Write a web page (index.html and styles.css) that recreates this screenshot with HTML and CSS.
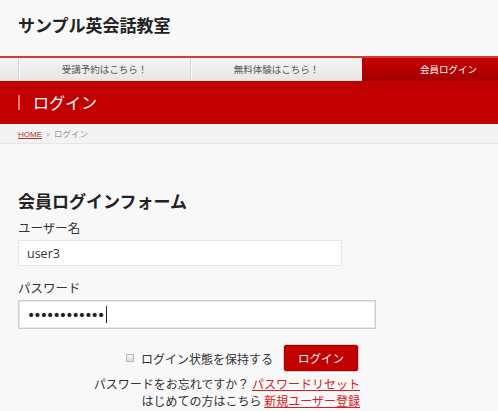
FILE: index.html
```html
<!DOCTYPE html>
<html lang="ja">
<head>
<meta charset="utf-8">
<title>ログイン | サンプル英会話教室</title>
<link rel="stylesheet" href="styles.css">
</head>
<body>
<header class="site-header">
  <h1 class="site-title">サンプル英会話教室</h1>
</header>
<nav class="gnav">
  <div class="gnav-spacer"></div>
  <a class="gnav-item" href="#">受講予約はこちら！</a>
  <a class="gnav-item" href="#">無料体験はこちら！</a>
  <a class="gnav-item is-active" href="#">会員ログイン</a>
</nav>
<div class="page-band">
  <span class="band-bar"></span>
  <h2 class="band-title">ログイン</h2>
</div>
<div class="crumbs">
  <a class="crumb-link" href="#">HOME</a><span class="crumb-sep">»</span><span class="crumb-current">ログイン</span>
</div>
<main class="content">
  <h3 class="form-title">会員ログインフォーム</h3>
  <form class="login-form">
    <div class="field-label">ユーザー名</div>
    <div class="text-input user-input">user3</div>
    <div class="field-label pass-label">パスワード</div>
    <div class="text-input pass-input is-focused"><span class="dots">••••••••••••</span><span class="caret"></span></div>
    <div class="form-foot">
      <div class="submit-row">
        <label class="remember"><span class="check"></span>ログイン状態を保持する</label>
        <button class="login-btn" type="button">ログイン</button>
      </div>
      <p class="foot-line">パスワードをお忘れですか？ <a class="red-link" href="#">パスワードリセット</a></p>
      <p class="foot-line">はじめての方はこちら <a class="red-link" href="#">新規ユーザー登録</a></p>
    </div>
  </form>
</main>
</body>
</html>
```
FILE: styles.css
```css
html, body {
  margin: 0;
  padding: 0;
}
body {
  background: #f8f8f8;
  color: #333;
  font-family: "Noto Sans CJK JP", "Open Sans", sans-serif;
  width: 498px;
  overflow: hidden;
}
.site-header {
  height: 56px;
  display: flex;
  align-items: center;
  padding-left: 18px;
}
.site-title {
  margin: 0 0 6px;
  font-size: 17px;
  font-weight: bold;
  color: #222;
  line-height: 20px;
}
.gnav {
  display: flex;
  border-top: 2px solid #d83a3a;
  height: 23px;
  background: linear-gradient(#f4f4f4, #e6e6e6);
  white-space: nowrap;
  overflow: hidden;
}
.gnav-spacer {
  width: 18px;
  flex: none;
}
.gnav-item {
  flex: none;
  width: 171px;
  border-left: 1px solid #d4d4d4;
  box-shadow: inset 1px 0 0 #fafafa;
  text-align: center;
  font-size: 9.5px;
  line-height: 23px;
  color: #555;
  text-decoration: none;
}
.gnav-item.is-active {
  border-left-color: #b00000;
  box-shadow: none;
  background: linear-gradient(#c80000, #a20000);
  color: #fff;
}
.page-band {
  height: 43px;
  background: #c30000;
  display: flex;
  align-items: center;
  padding-left: 18px;
}
.band-bar {
  width: 2px;
  height: 15px;
  background: #e47a7a;
  margin-right: 13px;
}
.band-title {
  margin: 0 0 1px;
  font-size: 16px;
  font-weight: normal;
  color: #fff;
  line-height: 20px;
}
.crumbs {
  height: 19px;
  background: #f3f3f3;
  border-bottom: 1px solid #e6e6e6;
  padding-left: 18px;
  font-size: 8.5px;
  line-height: 18px;
  color: #999;
}
.crumb-link {
  color: #b03030;
  text-decoration: underline;
  font-family: "Liberation Sans", sans-serif;
  font-size: 8px;
}
.crumb-sep {
  margin: 0 4px;
  color: #aaa;
}
.content {
  padding: 0 18px;
}
.form-title {
  margin: 45px 0 0;
  font-size: 17px;
  font-weight: bold;
  line-height: 24px;
  color: #222;
}
.login-form {
  margin: 0;
}
.field-label {
  margin-top: 6px;
  font-size: 12.5px;
  line-height: 18px;
  color: #333;
}
.pass-label {
  margin-top: 13px;
}
.text-input {
  box-sizing: border-box;
  background: #fff;
  border: 1px solid #e6e6e6;
  display: flex;
  align-items: center;
  padding-left: 8px;
  margin-top: 3px;
}
.user-input {
  width: 324px;
  height: 26px;
  font-family: "Open Sans", sans-serif;
  font-size: 12.5px;
  color: #333;
}
.pass-input {
  width: 358px;
  height: 29px;
  border: 1px solid #cbcbcb;
  box-shadow: inset 0 0 0 1px #e8e8e8;
}
.dots {
  font-family: "DejaVu Sans", sans-serif;
  font-size: 14px;
  letter-spacing: -1.9px;
  color: #222;
}
.caret {
  display: inline-block;
  width: 1px;
  height: 17px;
  background: #222;
  margin-left: 3px;
}
.form-foot {
  width: 342px;
  margin-top: 16px;
  text-align: right;
}
.submit-row {
  display: flex;
  justify-content: flex-end;
  align-items: center;
  padding-right: 2px;
}
.remember {
  display: flex;
  align-items: center;
  font-size: 12px;
  color: #333;
  margin-right: 11px;
}
.check {
  box-sizing: border-box;
  width: 8px;
  height: 8px;
  border: 1px solid #b5b5b5;
  background: linear-gradient(#f4f4f4, #dcdcdc);
  margin-right: 7px;
}
.login-btn {
  box-sizing: border-box;
  width: 74px;
  height: 26px;
  background: #c30000;
  border: 1px solid #a40000;
  box-shadow: 0 0 0 1px #e9c3c3;
  border-radius: 2px;
  color: #fff;
  font-family: "Noto Sans CJK JP", sans-serif;
  font-size: 11.5px;
  padding: 0;
}
.foot-line {
  margin: 0;
  font-size: 12px;
  line-height: 17px;
  color: #333;
}
.foot-line:first-of-type {
  margin-top: 4px;
}
.red-link {
  color: #d42020;
  text-decoration: underline;
}
```
